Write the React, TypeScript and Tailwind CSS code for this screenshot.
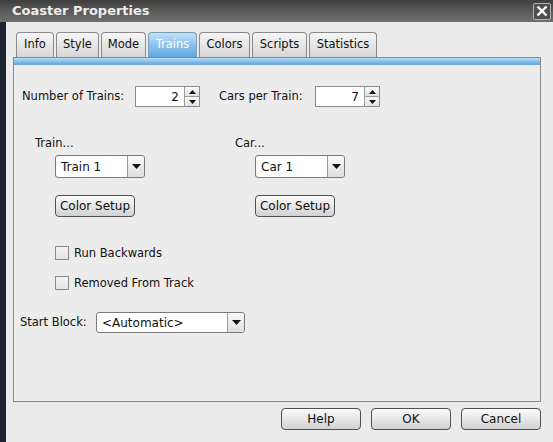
import React from 'react';

const tabs = [
  { label: 'Info', w: 'w-[38px]' },
  { label: 'Style', w: 'w-[43px]' },
  { label: 'Mode', w: 'w-[45px]' },
  { label: 'Trains', w: 'w-[49px]' },
  { label: 'Colors', w: 'w-[51px]' },
  { label: 'Scripts', w: 'w-[55px]' },
  { label: 'Statistics', w: 'w-[68px]' },
];

const font = { fontFamily: '"DejaVu Sans", Verdana, sans-serif' };

const Spinner = ({ value }: { value: string }) => (
  <div className="flex h-[21px] w-[65px] border border-[#8c8c8c] bg-white">
    <div className="flex flex-1 items-center justify-end pr-[5px] text-[12px] text-[#111]">{value}</div>
    <div className="flex w-[15px] flex-col border-l border-[#9a9a9a]">
      <div className="flex flex-1 items-center justify-center border-b border-[#9a9a9a] bg-gradient-to-b from-[#fafafa] to-[#e2e2e2]">
        <svg width="7" height="4" viewBox="0 0 7 4"><path d="M3.5 0 L7 4 L0 4 Z" fill="#111" /></svg>
      </div>
      <div className="flex flex-1 items-center justify-center bg-gradient-to-b from-[#fafafa] to-[#e2e2e2]">
        <svg width="7" height="4" viewBox="0 0 7 4"><path d="M0 0 L7 0 L3.5 4 Z" fill="#111" /></svg>
      </div>
    </div>
  </div>
);

const Dropdown = ({ value, w, h = 'h-[23px]' }: { value: string; w: string; h?: string }) => (
  <div className={`flex ${h} ${w} rounded-[3px] border border-[#7a7a7a] bg-white`}>
    <div className="flex flex-1 items-center pl-[5px] text-[12px] text-[#111]">{value}</div>
    <div className="flex w-[17px] items-center justify-center rounded-r-[3px] border-l border-[#9a9a9a] bg-gradient-to-b from-[#fafafa] to-[#dedede]">
      <svg width="9" height="5" viewBox="0 0 9 5"><path d="M0 0 L9 0 L4.5 5 Z" fill="#111" /></svg>
    </div>
  </div>
);

const Button = ({ label, w }: { label: string; w: string }) => (
  <div className={`flex h-[22px] ${w} items-center justify-center rounded-[4px] border border-[#505050] bg-gradient-to-b from-[#fbfbfb] to-[#d2d2d2] text-[12px] text-[#111]`}>
    {label}
  </div>
);

const Check = ({ label }: { label: string }) => (
  <div className="flex h-[14px] items-center">
    <div className="h-[14px] w-[14px] border border-[#8a8a8a] bg-gradient-to-b from-[#f4f4f4] to-[#e4e4e4]" />
    <span className="ml-[5px] text-[11.5px] leading-[14px] text-[#111]">{label}</span>
  </div>
);

export default function App() {
  return (
    <div className="flex h-[442px] w-[553px] flex-col overflow-hidden bg-[#1e2430]" style={font}>
      {/* title bar */}
      <div className="flex h-[22px] items-center bg-gradient-to-b from-[#3e3e3e] via-[#5a5a5a] to-[#6e6e6e] pl-[12px] pr-[2px]">
        <span className="flex-1 text-[13px] font-bold text-[#ececec]">Coaster Properties</span>
        <div className="flex h-[17px] w-[18px] items-center justify-center rounded-[2px] border border-[#b0b0b0] bg-[#4e4e4e]">
          <svg width="12" height="12" viewBox="0 0 12 12">
            <path d="M1.5 1.5 L10.5 10.5 M10.5 1.5 L1.5 10.5" stroke="#fff" strokeWidth="2.4" />
          </svg>
        </div>
      </div>

      <div className="flex flex-1">
        <div className="w-[6px]" />
        <div className="flex flex-1 flex-col bg-[#ebebeb] pl-[7px] pr-[12px] pt-[10px] text-[11.5px]">
          {/* tabs */}
          <div className="flex gap-[2px] pl-[3px]">
            {tabs.map((t) =>
              t.label === 'Trains' ? (
                <div
                  key={t.label}
                  className={`flex h-[25px] ${t.w} items-center justify-center rounded-t-[4px] border border-b-0 border-[#7d9bb5] bg-gradient-to-b from-[#c2e0f7] via-[#8cc2ee] to-[#5ea8e2] text-[11.5px] text-white`}
                >
                  {t.label}
                </div>
              ) : (
                <div
                  key={t.label}
                  className={`flex h-[25px] ${t.w} items-center justify-center rounded-t-[4px] border border-b-0 border-[#8a8a8a] bg-gradient-to-b from-[#f6f6f6] to-[#d6d6d6] text-[11.5px] text-[#111]`}
                >
                  {t.label}
                </div>
              )
            )}
          </div>

          {/* panel */}
          <div className="flex h-[345px] flex-col border border-[#8a8a8a] bg-[#ececec]">
            <div className="h-[7px] border-b border-[#6fa6d4] bg-gradient-to-b from-[#b9dcf6] to-[#62abe3]" />

            <div className="mt-[21px] flex h-[21px] items-center pl-[8px]">
              <span className="w-[113px] text-[11.5px] text-[#111]">Number of Trains:</span>
              <Spinner value="2" />
              <span className="ml-[19px] w-[96px] text-[11.5px] text-[#111]">Cars per Train:</span>
              <Spinner value="7" />
            </div>

            <div className="mt-[29px] flex pl-[21px]">
              <div className="flex w-[200px] flex-col">
                <span className="h-[14px] text-[11.5px] leading-[14px] text-[#111]">Train...</span>
                <div className="ml-[20px] mt-[5px]">
                  <Dropdown value="Train 1" w="w-[90px]" />
                </div>
                <div className="ml-[20px] mt-[17px]">
                  <Button label="Color Setup" w="w-[80px]" />
                </div>
              </div>
              <div className="flex w-[200px] flex-col">
                <span className="h-[14px] text-[11.5px] leading-[14px] text-[#111]">Car...</span>
                <div className="ml-[20px] mt-[5px]">
                  <Dropdown value="Car 1" w="w-[90px]" />
                </div>
                <div className="ml-[20px] mt-[17px]">
                  <Button label="Color Setup" w="w-[80px]" />
                </div>
              </div>
            </div>

            <div className="ml-[41px] mt-[29px] flex flex-col gap-[16px]">
              <Check label="Run Backwards" />
              <Check label="Removed From Track" />
            </div>

            <div className="mt-[22px] flex h-[21px] items-center pl-[6px]">
              <span className="w-[76px] text-[11.5px] text-[#111]">Start Block:</span>
              <Dropdown value="<Automatic>" w="w-[149px]" h="h-[21px]" />
            </div>
          </div>

          {/* buttons */}
          <div className="mt-[6px] flex justify-end gap-[10px]">
            <Button label="Help" w="w-[80px]" />
            <Button label="OK" w="w-[80px]" />
            <Button label="Cancel" w="w-[80px]" />
          </div>
        </div>
      </div>
    </div>
  );
}
